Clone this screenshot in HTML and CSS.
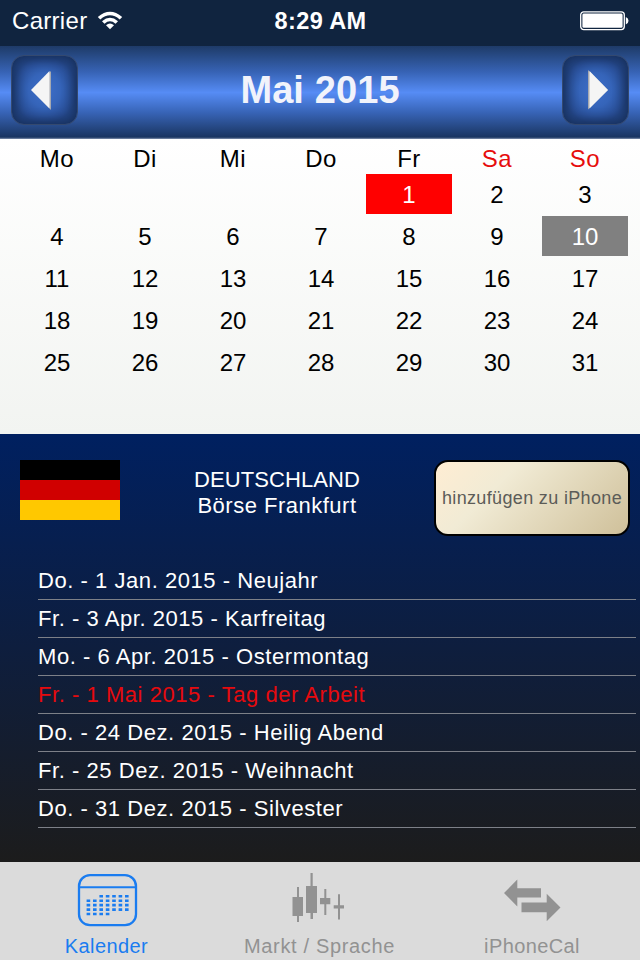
FILE: index.html
```html
<!DOCTYPE html>
<html lang="de">
	<head>
		<meta charset="utf-8">
		<title>Börsenkalender</title>
		<link rel="stylesheet" href="styles.css">
	</head>
	<body>
		<div class="status">
			<div class="status_left">
				<span class="carrier">Carrier</span>
				<svg class="wifi" width="26" height="20" viewBox="0 0 26 20">
					<path d="M.8 6Q13-4.400 25.200 6L22.700 8.500Q13 .2 3.300 8.500Z"/>
					<path d="M5 10.200Q13 3.400 21 10.200L18.500 12.700Q13 8 7.500 12.700Z"/>
					<path d="M9 14.200Q13 10.900 17 14.200L13 18.200Z"/>
				</svg>
			</div>
			<span class="time">8:29 AM</span>
			<div class="status_right">
				<svg width="50" height="20" viewBox="0 0 50 20">
					<rect x="1.700" y=".8" width="43.600" height="17.800" rx="3" fill="none" stroke="#fff" stroke-width="1.300"/>
					<rect x="3.400" y="2.600" width="40.200" height="14.200" rx="1.400" fill="#fff"/>
					<path d="M46.800 6Q49.500 7 49.500 9.700Q49.500 12.400 46.800 13.400Z" fill="#fff"/>
				</svg>
			</div>
		</div>

		<div class="header">
			<div class="arrow">
				<svg width="20" height="40" viewBox="0 0 20 40">
					<path class="tri_shadow" d="M20 1V40L1 20.5Z"/>
					<path class="tri" d="M18.5 1V38.5L0 20Z"/>
				</svg>
			</div>
			<h1>Mai 2015</h1>
			<div class="arrow next">
				<svg width="20" height="40" viewBox="0 0 20 40">
					<path class="tri_shadow" d="M0 0V39.5L20 20Z"/>
					<path class="tri" d="M1.5 1V38.5L20 20Z"/>
				</svg>
			</div>
		</div>

		<div class="calendar">
			<div class="week">
				<span>Mo</span><span>Di</span><span>Mi</span><span>Do</span><span>Fr</span><span class="red">Sa</span><span class="red">So</span>
			</div>
			<div class="days">
				<span class="holiday">1</span><span>2</span><span>3</span>
				<span>4</span><span>5</span><span>6</span><span>7</span><span>8</span><span>9</span><span class="today">10</span>
				<span>11</span><span>12</span><span>13</span><span>14</span><span>15</span><span>16</span><span>17</span>
				<span>18</span><span>19</span><span>20</span><span>21</span><span>22</span><span>23</span><span>24</span>
				<span>25</span><span>26</span><span>27</span><span>28</span><span>29</span><span>30</span><span>31</span>
			</div>
		</div>

		<div class="market">
			<div class="market_top">
				<div class="flag"></div>
				<div class="market_name"><span class="land">DEUTSCHLAND</span><br>Börse Frankfurt</div>
				<div class="add_btn">hinzufügen zu iPhone</div>
			</div>
			<ul class="list">
				<li>Do. - 1 Jan. 2015 - Neujahr</li>
				<li>Fr. - 3 Apr. 2015 - Karfreitag</li>
				<li>Mo. - 6 Apr. 2015 - Ostermontag</li>
				<li class="active">Fr. - 1 Mai 2015 - Tag der Arbeit</li>
				<li>Do. - 24 Dez. 2015 - Heilig Abend</li>
				<li>Fr. - 25 Dez. 2015 - Weihnacht</li>
				<li>Do. - 31 Dez. 2015 - Silvester</li>
			</ul>
		</div>

		<div class="tabbar">
			<div class="tab on">
				<svg width="60" height="54" viewBox="0 0 60 54">
					<rect x="2" y="1.2" width="57" height="50" rx="11" fill="none" stroke="currentColor" stroke-width="2.3"/>
					<path d="M2 13.2H59" stroke="currentColor" stroke-width="2"/>
					<!-- Tagesraster -->
					<g fill="none" stroke="currentColor" stroke-width="2.6" stroke-dasharray="3.6 2.8">
						<path d="M22.4 22.3H52"/>
						<path d="M9.6 26.7H52"/>
						<path d="M9.6 31.1H52"/>
						<path d="M9.6 35.6H52"/>
						<path d="M9.6 40H32.4"/>
					</g>
				</svg>
				<span>Kalender</span>
			</div>
			<div class="tab markt">
				<svg width="54" height="54" viewBox="0 0 54 54" fill="currentColor">
					<path d="M4 13h2v10h4v19h-4v6h-2v-6h-4.500v-19h4.500z"/>
					<path d="M17.500 -1h2.200v13h4.300v27h-4v6h-2.500v-6h-4.500v-27h4.500z"/>
					<path d="M31.300 15h2v9h4v6.300h-4v10.700h-2v-10.700h-4.300v-6.300h4.300z"/>
					<path d="M45 20.300h2v11h4v3.200h-4v11h-2v-11h-4.300v-3.200h4.300z"/>
				</svg>
				<span>Markt / Sprache</span>
			</div>
			<div class="tab cal">
				<svg width="58" height="54" viewBox="0 0 58 54" fill="currentColor">
					<path d="M1 19L14.300 5.500V14.200H38V23.500H14.300V32.500Z"/>
					<path d="M57.500 33.500L43.700 19.800V28.500H18.500V38.200H43.700V47.200Z"/>
				</svg>
				<span>iPhoneCal</span>
			</div>
		</div>
	</body>
</html>
```
FILE: styles.css
```css
*{
	box-sizing: border-box;
}
body {
	margin: 0;
	width: 640px;
	height: 960px;
	overflow: hidden;
	font-family: "Liberation Sans", Arial, sans-serif;
	display: flex;
	flex-direction: column;
}
svg {
	display: block;
	overflow: visible;
}

/* Statusleiste */
.status {
	height: 46px;
	flex: none;
	display: grid;
	grid-template-columns: 1fr auto 1fr;
	align-items: center;
	padding: 0 11px 5px 12px;
	background: #10243f;
	color: #fff;
	font-size: 24px;
}
.status_left {
	display: flex;
	align-items: center;
	gap: 10px;
}
.carrier {
	letter-spacing: .3px;
}
.wifi {
	fill: #fff;
}
.time {
	padding-top: 1px;
	font-weight: bold;
	font-size: 23.5px;
	letter-spacing: .4px;
}
.status_right {
	display: flex;
	justify-content: flex-end;
}

/* Monat */
.header {
	height: 93px;
	flex: none;
	display: flex;
	align-items: center;
	justify-content: space-between;
	padding: 0 11px 6px;
	background: linear-gradient(#1e3b68 0%, #3763b5 28%, #568cf5 50%, #3763b5 72%, #1a3561 98%, #8291ad 100%);
}
.header h1 {
	margin: 0;
	padding-top: 2px;
	font-size: 38px;
	letter-spacing: .1px;
	color: #f1f3fb;
}
.arrow {
	width: 67px;
	height: 70px;
	display: flex;
	align-items: center;
	padding-left: 19px;
	border: 1px solid #34496f;
	border-radius: 13px;
	background: radial-gradient(closest-side, #3e6fca 0%, #3564b9 50%, #2a5099 85%, #25488a 100%);
	box-shadow: inset 0 0 11px 3px #162e59;
}
.arrow.next {
	padding-left: 25px;
}
.tri {
	fill: #f5f5f5;
}
.tri_shadow {
	fill: #a6a9b0;
}

/* Kalender */
.calendar {
	height: 295px;
	flex: none;
	padding: 0 12px 0 14px;
	background: linear-gradient(#fff, #f2f4f1);
	font-size: 24px;
	text-align: center;
}
.week, .days {
	display: grid;
	grid-template-columns: repeat(7, 86px);
	column-gap: 2px;
}
.week {
	height: 35px;
	line-height: 40px;
	letter-spacing: .5px;
}
.week .red {
	color: #e60d0d;
}
.days {
	grid-auto-rows: 40px;
	row-gap: 2px;
	line-height: 42px;
}
.days .holiday {
	grid-column: 5;
	background: #f00;
	color: #fff;
}
.days .today {
	background: #808080;
	color: #fff;
}

/* Markt und Feiertage */
.market {
	height: 428px;
	flex: none;
	background: linear-gradient(#002060 0%, #1c1c1c 100%);
	color: #fff;
}
.market_top {
	height: 128px;
	display: flex;
	align-items: flex-start;
	justify-content: space-between;
	padding: 26px 10px 0 20px;
}
.flag {
	width: 100px;
	height: 60px;
	background: linear-gradient(#000 0 20px, #d00000 20px 40px, #ffc800 40px);
}
.market_name {
	padding-top: 7px;
	font-size: 22px;
	line-height: 26px;
	letter-spacing: .5px;
	text-align: center;
}
.land {
	letter-spacing: .1px;
}
.add_btn {
	width: 196px;
	height: 76px;
	border: 2px solid #000;
	border-radius: 14px;
	background: linear-gradient(135deg, #ffedd3 0%, #f1ebd5 32%, #cfc09a 100%);
	color: #5c5c58;
	font-size: 18px;
	letter-spacing: .35px;
	line-height: 72px;
	text-align: center;
	white-space: nowrap;
}
.list {
	margin: 0;
	padding: 0 4px 0 38px;
	list-style: none;
	font-size: 22px;
	letter-spacing: .55px;
}
.list li {
	height: 38px;
	line-height: 38px;
	border-bottom: 1px solid #7d8088;
}
.list .active {
	color: #e60a0e;
}

/* Tabs */
.tabbar {
	height: 98px;
	flex: none;
	display: flex;
	background: #dbdbdb;
	color: #929292;
	font-size: 20px;
}
.tab {
	width: 213px;
	padding-top: 12px;
	display: flex;
	flex-direction: column;
	align-items: center;
	letter-spacing: .4px;
}
.tab span {
	margin-top: 7px;
}
.tab.on {
	color: #1a7cf0;
}
.tab.markt {
	letter-spacing: .65px;
}
.tab.cal {
	width: 212px;
}
```
